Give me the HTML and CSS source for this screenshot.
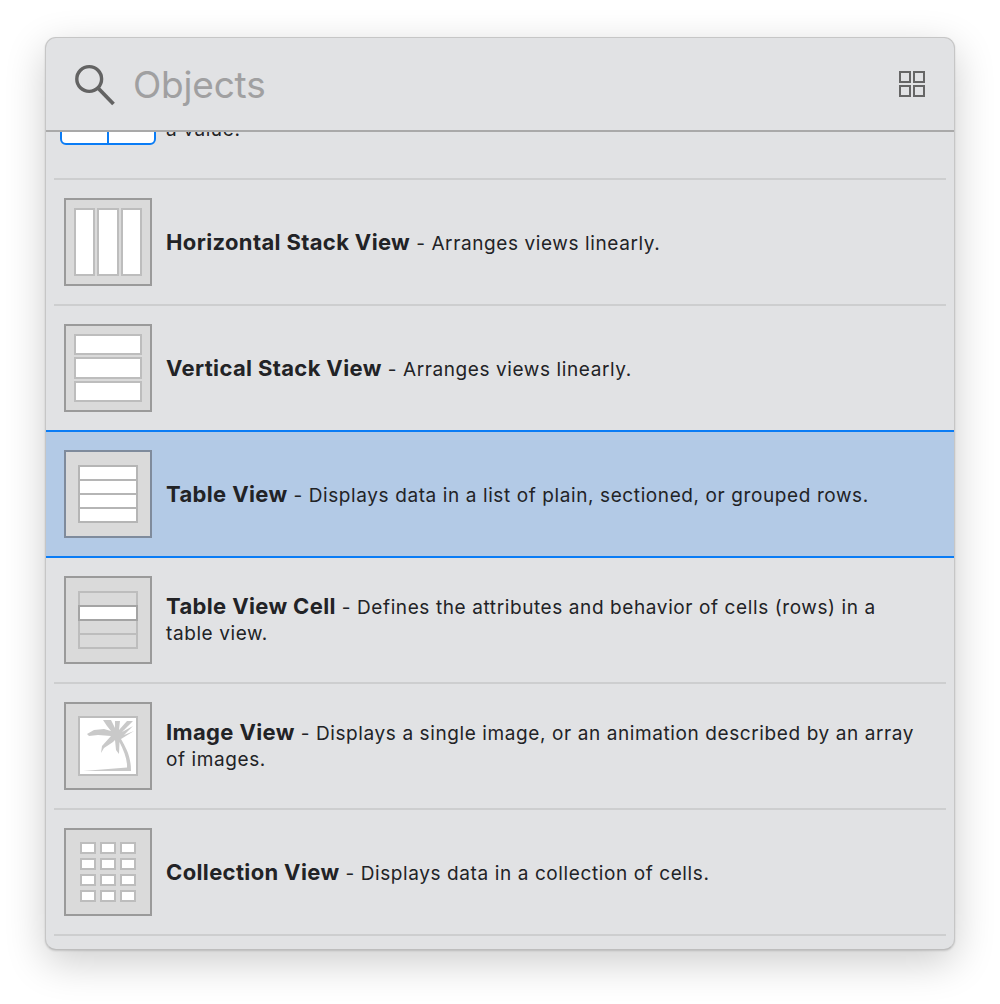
FILE: index.html
```html
<!DOCTYPE html>
<html lang="en">
<head>
<meta charset="utf-8">
<title>Objects</title>
<link rel="stylesheet" href="styles.css">
</head>
<body>
<div class="panel">
  <header class="search">
    <svg class="search-icon" width="44" height="42" viewBox="0 0 44 42" aria-hidden="true">
      <circle cx="17.2" cy="15" r="12.4" fill="none" stroke="#636363" stroke-width="3.4"/>
      <path d="M26 24 L41.5 40" fill="none" stroke="#636363" stroke-width="3.8"/>
    </svg>
    <span class="search-text">Objects</span>
    <div class="view-toggle"><i></i><i></i><i></i><i></i></div>
  </header>
  <div class="list">
    <div class="row row-scrolled">
      <div class="row-inner">
        <div class="stepper"><i></i><i></i></div>
        <p class="desc"><b>Stepper</b> - Provides a user interface for incrementing or decrementing<br>a value.</p>
      </div>
    </div>
    <div class="row">
      <div class="row-inner">
        <div class="icon"><div class="glyph hstack"><i></i><i></i><i></i></div></div>
        <p class="desc single"><b>Horizontal Stack View</b> - Arranges views linearly.</p>
      </div>
    </div>
    <div class="row">
      <div class="row-inner">
        <div class="icon"><div class="glyph vstack"><i></i><i></i><i></i></div></div>
        <p class="desc single"><b>Vertical Stack View</b> - Arranges views linearly.</p>
      </div>
    </div>
    <div class="row row-selected">
      <div class="row-inner">
        <div class="icon"><div class="glyph table"><i></i><i></i><i></i><i></i></div></div>
        <p class="desc single"><b>Table View</b> - Displays data in a list of plain, sectioned, or grouped rows.</p>
      </div>
    </div>
    <div class="row">
      <div class="row-inner">
        <div class="icon"><div class="glyph cell"><i></i><i class="on"></i><i></i><i></i></div></div>
        <p class="desc"><b>Table View Cell</b> - Defines the attributes and behavior of cells (rows) in a table view.</p>
      </div>
    </div>
    <div class="row">
      <div class="row-inner">
        <div class="icon">
          <div class="glyph image">
            <svg width="56" height="56" viewBox="0 0 56 56" aria-hidden="true">
              <path fill="#c9c9c9" d="M3 53 L47 49.5 C47.5 42 44 33 39.5 24 L39 36 L36 32 L35 22 L33 24 L24 30 L21 35 L22 28 L31 18 L18 17 L9 18 L7 16 L14 12 L24 11 L31 13 L27 8 L23 2 L31 2 L35 10 L35 3 L40 3 L39 12 L47 3 L53 3 L42 14 L53 8 L44 17 L54 13 L41 21 C46 30 51 38 51 53 Z"/>
            </svg>
          </div>
        </div>
        <p class="desc"><b>Image View</b> - Displays a single image, or an animation described by an array of images.</p>
      </div>
    </div>
    <div class="row">
      <div class="row-inner">
        <div class="icon"><div class="glyph collection"><i></i><i></i><i></i><i></i><i></i><i></i><i></i><i></i><i></i><i></i><i></i><i></i></div></div>
        <p class="desc single"><b>Collection View</b> - Displays data in a collection of cells.</p>
      </div>
    </div>
  </div>
</div>
</body>
</html>
```
FILE: styles.css
```css
* { box-sizing: border-box; }
html, body { margin: 0; background: #fff; }
body {
  height: 1004px;
  padding: 37px 45px 0;
  font-family: Inter, "Liberation Sans", sans-serif;
  color: #222326;
  overflow: hidden;
}
.panel {
  width: 910px;
  height: 913px;
  background: #e1e2e4;
  border: 1px solid #c6c6c6;
  border-bottom-color: #bdbdbd;
  border-radius: 11px;
  box-shadow: 0 12px 40px rgba(0, 0, 0, .2), 0 1px 2px rgba(0, 0, 0, .14);
  overflow: hidden;
  display: flex;
  flex-direction: column;
}
.search {
  flex: none;
  height: 94px;
  border-bottom: 2px solid #a9a9a9;
  display: flex;
  align-items: center;
  padding: 0 29px 0 26px;
}
.search-icon { flex: none; margin-top: 1px; }
.search-text {
  margin-left: 17px;
  font-size: 37px;
  letter-spacing: -.2px;
  color: #a0a0a1;
  flex: 1;
}
.view-toggle {
  width: 26px;
  height: 26px;
  display: grid;
  grid-template-columns: 12px 12px;
  grid-template-rows: 12px 12px;
  gap: 2px;
}
.view-toggle i { border: 2px solid #666; }
.list { flex: 1; min-height: 0; overflow: hidden; }
.row { height: 126px; padding: 0 8px; }
.row-scrolled { margin-top: -78px; }
.row-inner {
  height: 100%;
  display: flex;
  align-items: center;
  gap: 14px;
  padding-left: 10px;
  border-bottom: 2px solid #cdcecf;
}
.row-selected {
  height: 128px;
  margin-top: -2px;
  background: #b3cae6;
  border-top: 2px solid #0a7cf5;
  border-bottom: 2px solid #0a7cf5;
}
.row-selected .row-inner { border-bottom: 0; }
.row-selected .icon { border-color: #7f8b9c; }
.desc {
  margin: 0;
  flex: 1;
  padding-right: 26px;
  font-size: 19px;
  line-height: 26px;
  letter-spacing: .6px;
}
.desc.single { padding-top: 2px; }
.desc b { font-size: 22px; font-weight: 700; letter-spacing: .36px; }
.icon {
  flex: none;
  width: 88px;
  height: 88px;
  border: 2px solid #9a9a9a;
  background: #dadada;
  display: flex;
  align-items: center;
  justify-content: center;
}
.glyph i { display: block; background: #fff; border: 2px solid #bdbdbd; }
.hstack, .vstack { width: 68px; height: 68px; display: grid; gap: 2px; }
.hstack { grid-template-columns: 21px 22px 21px; }
.vstack { grid-template-rows: 21px 22px 21px; }
.table, .cell {
  width: 60px;
  height: 58px;
  display: flex;
  flex-direction: column;
  border: 2px solid #b5b5b5;
  background: #b5b5b5;
  gap: 2px;
}
.table i, .cell i { flex: 1; border: 0; }
.cell { background: #bdbdbd; border-color: #bdbdbd; }
.cell i { background: #dadada; }
.cell i.on { background: #fff; box-shadow: 0 0 0 2px #a4a4a4; }
.image {
  width: 60px;
  height: 60px;
  background: #fff;
  border: 2px solid #bdbdbd;
}
.image svg { display: block; }
.collection {
  display: grid;
  grid-template-columns: repeat(3, 16px);
  grid-template-rows: repeat(4, 12px);
  gap: 4px;
}
.stepper {
  flex: none;
  width: 96px;
  height: 58px;
  margin: 0 -4px;
  display: flex;
  background: #0a7cf5;
  border: 2px solid #0a7cf5;
  border-radius: 6px;
  gap: 2px;
  overflow: hidden;
}
.stepper i { flex: 1; background: #fff; }
```
